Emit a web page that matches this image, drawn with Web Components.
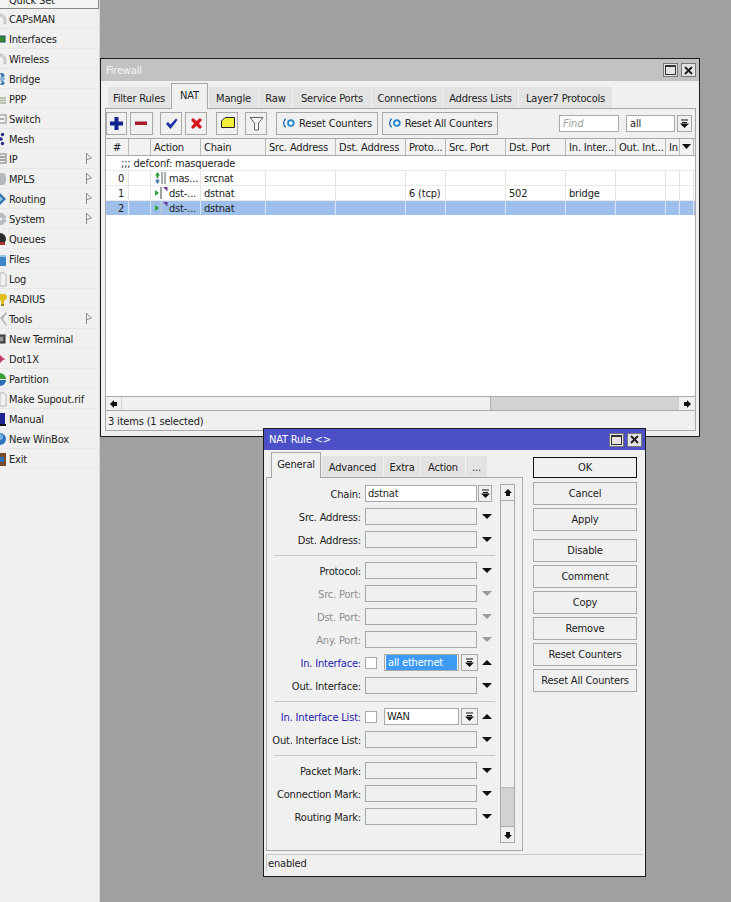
<!DOCTYPE html>
<html><head><meta charset="utf-8"><title>Firewall</title>
<style>
html,body{margin:0;padding:0;background:#a0a0a0}
body{font:11px/13px "DejaVu Sans",sans-serif;font-stretch:condensed;color:#222}
</style></head><body>
<mt-desktop>
  <mt-sidebar>
    <mt-item top>Quick Set</mt-item>
    <mt-item icon="caps">CAPsMAN</mt-item>
    <mt-item icon="iface">Interfaces</mt-item>
    <mt-item icon="caps">Wireless</mt-item>
    <mt-item icon="bridge">Bridge</mt-item>
    <mt-item icon="ppp">PPP</mt-item>
    <mt-item icon="switch">Switch</mt-item>
    <mt-item icon="mesh">Mesh</mt-item>
    <mt-item icon="ip" sub>IP</mt-item>
    <mt-item icon="mpls" sub>MPLS</mt-item>
    <mt-item icon="routing" sub>Routing</mt-item>
    <mt-item icon="system" sub>System</mt-item>
    <mt-item icon="queues">Queues</mt-item>
    <mt-item icon="files">Files</mt-item>
    <mt-item icon="log">Log</mt-item>
    <mt-item icon="radius">RADIUS</mt-item>
    <mt-item icon="tools" sub>Tools</mt-item>
    <mt-item icon="term">New Terminal</mt-item>
    <mt-item icon="dot1x">Dot1X</mt-item>
    <mt-item icon="part">Partition</mt-item>
    <mt-item icon="log">Make Supout.rif</mt-item>
    <mt-item icon="manual">Manual</mt-item>
    <mt-item icon="winbox">New WinBox</mt-item>
    <mt-item icon="exit">Exit</mt-item>
  </mt-sidebar>

  <mt-window heading="Firewall" x="100" y="58" w="600" h="379" bar="22" barcolor="#c2c2c2" titlecolor="#f4f4f4">
    <mt-tabs pad="7" rowh="27">
      <mt-tab w="62">Filter Rules</mt-tab><mt-tab w="37" on>NAT</mt-tab><mt-tab w="49">Mangle</mt-tab><mt-tab w="33">Raw</mt-tab><mt-tab w="78">Service Ports</mt-tab><mt-tab w="70">Connections</mt-tab><mt-tab w="75">Address Lists</mt-tab><mt-tab w="93">Layer7 Protocols</mt-tab>
    </mt-tabs>
    <mt-panel style="margin:0 3px 5px 4px;height:323px">
      <mt-toolbar>
        <mt-tool w="21" icon="plus"></mt-tool>
        <mt-tool w="23" gap="3" icon="minus"></mt-tool>
        <mt-tool w="22" gap="7" icon="check"></mt-tool>
        <mt-tool w="22" gap="3" icon="cross"></mt-tool>
        <mt-tool w="22" gap="9" icon="note"></mt-tool>
        <mt-tool w="22" gap="7" icon="funnel"></mt-tool>
        <mt-tool w="102" gap="9" icon="reset">Reset Counters</mt-tool>
        <mt-tool w="116" gap="4" icon="reset">Reset All Counters</mt-tool>
        <mt-spacer></mt-spacer>
        <mt-input w="60" hint>Find</mt-input>
        <mt-input w="49" style="margin-left:7px">all</mt-input>
        <mt-drop style="margin-left:2px;width:15px" kind="bar"></mt-drop>
      </mt-toolbar>
      <mt-table>
        <mt-row head>
          <mt-cell center>#</mt-cell><mt-cell></mt-cell><mt-cell>Action</mt-cell><mt-cell>Chain</mt-cell><mt-cell>Src. Address</mt-cell><mt-cell>Dst. Address</mt-cell><mt-cell>Proto...</mt-cell><mt-cell>Src. Port</mt-cell><mt-cell>Dst. Port</mt-cell><mt-cell>In. Inter...</mt-cell><mt-cell>Out. Int...</mt-cell><mt-cell>In</mt-cell><mt-cell center><mt-glyph name="down"></mt-glyph></mt-cell>
        </mt-row>
        <mt-row comment>;;; defconf: masquerade</mt-row>
        <mt-row>
          <mt-cell right>0</mt-cell><mt-cell></mt-cell><mt-cell><mt-glyph name="masq"></mt-glyph>mas...</mt-cell><mt-cell>srcnat</mt-cell><mt-cell></mt-cell><mt-cell></mt-cell><mt-cell></mt-cell><mt-cell></mt-cell><mt-cell></mt-cell><mt-cell></mt-cell><mt-cell></mt-cell><mt-cell></mt-cell><mt-cell></mt-cell>
        </mt-row>
        <mt-row>
          <mt-cell right>1</mt-cell><mt-cell></mt-cell><mt-cell><mt-glyph name="dst"></mt-glyph>dst-...</mt-cell><mt-cell>dstnat</mt-cell><mt-cell></mt-cell><mt-cell></mt-cell><mt-cell>6 (tcp)</mt-cell><mt-cell></mt-cell><mt-cell>502</mt-cell><mt-cell>bridge</mt-cell><mt-cell></mt-cell><mt-cell></mt-cell><mt-cell></mt-cell>
        </mt-row>
        <mt-row selected>
          <mt-cell right>2</mt-cell><mt-cell></mt-cell><mt-cell><mt-glyph name="dstsel"></mt-glyph>dst-...</mt-cell><mt-cell>dstnat</mt-cell><mt-cell></mt-cell><mt-cell></mt-cell><mt-cell></mt-cell><mt-cell></mt-cell><mt-cell></mt-cell><mt-cell></mt-cell><mt-cell></mt-cell><mt-cell></mt-cell><mt-cell></mt-cell>
        </mt-row>
      </mt-table>
      <mt-hscroll></mt-hscroll>
      <mt-status plain>3 items (1 selected)</mt-status>
    </mt-panel>
  </mt-window>

  <mt-window heading="NAT Rule &lt;&gt;" x="263" y="428" w="383" h="449" bar="21" barcolor="#4b50c6" titlecolor="#fff">
    <mt-split>
      <div slot="left">
        <mt-tabs pad="7" rowh="27">
          <mt-tab w="50" on>General</mt-tab><mt-tab w="61">Advanced</mt-tab><mt-tab w="36">Extra</mt-tab><mt-tab w="44">Action</mt-tab><mt-tab w="21">...</mt-tab>
        </mt-tabs>
        <mt-panel style="height:374px;width:257px;margin-left:2px">
          <mt-form>
            <mt-field label="Chain:" value="dstnat" arrow="bar"></mt-field>
            <mt-field label="Src. Address:" arrow="down"></mt-field>
            <mt-field label="Dst. Address:" arrow="down"></mt-field>
            <mt-sep></mt-sep>
            <mt-field label="Protocol:" arrow="down"></mt-field>
            <mt-field label="Src. Port:" arrow="down" disabled></mt-field>
            <mt-field label="Dst. Port:" arrow="down" disabled></mt-field>
            <mt-field label="Any. Port:" arrow="down" disabled></mt-field>
            <mt-field label="In. Interface:" value="all ethernet" blue check selected></mt-field>
            <mt-field label="Out. Interface:" arrow="down"></mt-field>
            <mt-sep></mt-sep>
            <mt-field label="In. Interface List:" value="WAN" blue check></mt-field>
            <mt-field label="Out. Interface List:" arrow="down"></mt-field>
            <mt-sep></mt-sep>
            <mt-field label="Packet Mark:" arrow="down"></mt-field>
            <mt-field label="Connection Mark:" arrow="down"></mt-field>
            <mt-field label="Routing Mark:" arrow="down"></mt-field>
          </mt-form>
          <mt-vscroll></mt-vscroll>
        </mt-panel>
      </div>
      <mt-actions slot="right">
        <mt-btn default style="height:21px">OK</mt-btn>
        <mt-btn style="margin-top:1px">Cancel</mt-btn>
        <mt-btn>Apply</mt-btn>
        <mt-btn style="margin-top:5px">Disable</mt-btn>
        <mt-btn>Comment</mt-btn>
        <mt-btn>Copy</mt-btn>
        <mt-btn>Remove</mt-btn>
        <mt-btn>Reset Counters</mt-btn>
        <mt-btn>Reset All Counters</mt-btn>
      </mt-actions>
    </mt-split>
    <mt-status>enabled</mt-status>
  </mt-window>
</mt-desktop>

<script>
const FONT='font:11px/13px "DejaVu Sans",sans-serif;font-stretch:condensed;letter-spacing:-.18px;';
const ICONS={
 caps:'<path d="M0 3c4 0 6 3 6 7v3H4v-3C4 7 2 5 0 5z" fill="#d4d4d4" stroke="#b4b4b4" stroke-width=".6"/>',
 iface:'<rect x="-1" y="5" width="6" height="6" fill="#2f8f2f" stroke="#2b4a5a"/>',
 bridge:'<path d="M0 2h3l2 3-2 1 2 2-2 2 2 2-2 2H0l2-3-2-2 2-2z" fill="#3f78b5"/><path d="M0 6h4v4H0z" fill="#8fb4da"/>',
 ppp:'<path d="M0 7h6M0 9.5h6M0 12h6" stroke="#a6b59a" stroke-width="1.3"/>',
 switch:'<rect x="-2" y="4" width="8" height="8" fill="#f2f2f2" stroke="#8a8a8a"/><path d="M0 8h4" stroke="#666"/>',
 mesh:'<circle cx="2.5" cy="3.5" r="1.7" fill="#23307f"/><circle cx="1" cy="8" r="1.7" fill="#23307f"/><circle cx="2.5" cy="12.5" r="1.7" fill="#23307f"/>',
 ip:'<rect x="-2" y="3" width="8" height="9" fill="#efefef" stroke="#777"/><path d="M-1 6h6M-1 9h6" stroke="#555"/>',
 mpls:'<path d="M0 2h3c2 0 3 2 3 6s-1 6-3 6H0z" fill="#b5b8bd"/>',
 routing:'<path d="M0 2l6 6-6 6z" fill="#2f72ad"/><path d="M0 5l3 3-3 3z" fill="#8cc0e4"/>',
 system:'<path d="M0 2h3l1 2 2 1v2l-2 1 2 1v2l-2 1-1 2H0z" fill="#b8bcc0"/><circle cx="1" cy="8" r="1.5" fill="#eee"/>',
 queues:'<circle cx="0" cy="8" r="6" fill="#2c2a2a"/><path d="M0 11h5v3H0z" fill="#a33"/>',
 files:'<path d="M0 4h6v11H0z" fill="#3d88c8"/><path d="M0 4h6v2H0z" fill="#9cc8e8"/>',
 log:'<path d="M0 2h4l2 2v11H0z" fill="#f4f4f4" stroke="#b5b5b5"/>',
 radius:'<path d="M0 3h4c2 0 3 1 3 3s-2 3-3 4v3H1v-3L0 9z" fill="#e0c020"/><rect x="1" y="13" width="3" height="2" fill="#98881c"/>',
 tools:'<path d="M0 7l6-6 1 1-4 6 4 6-1 1z" fill="#b4b6b8"/>',
 term:'<rect x="-2" y="4" width="7" height="8" fill="#55565a" stroke="#333"/><rect x="-1" y="6" width="4" height="4" fill="#9a9a9a"/>',
 dot1x:'<path d="M0 4l4 4-4 4z" fill="#c03a5a"/><path d="M5 8H2" stroke="#d27"/>',
 part:'<path d="M0 2c3 0 6 3 6 6H0z" fill="#3aa03a"/><path d="M0 9h6c0 3-3 6-6 6z" fill="#2f6fb5"/>',
 manual:'<rect x="-1" y="2" width="6" height="11" fill="#1e2590"/><rect x="-1" y="13" width="7" height="2" fill="#111"/>',
 winbox:'<circle cx="0" cy="8" r="6" fill="#2f74c0"/><circle cx="0" cy="6" r="3" fill="#7bb2e2"/>',
 exit:'<rect x="-1" y="2" width="7" height="13" fill="#7a4a2a"/><rect x="0" y="6" width="4" height="5" fill="#2a70c0"/>'
};
const TOOLS={
 plus:'<path d="M5.5 1h4v4.5H14v4H9.5V14h-4V9.500H1v-4h4.500z" fill="#10238f"/>',
 minus:'<rect x="1" y="5.500" width="12" height="3.500" fill="#a91e24"/>',
 check:'<path d="M2 8l2-2 2.500 2.500L12 2.500l1.500 1.500L6.500 13z" fill="#1a2fa8"/>',
 cross:'<path d="M2 4l2-2 3.500 3L11 2l2 2-3 3.500 3 3.500-2 2-3.500-3L4 13l-2-2 3-3.500z" fill="#d5171c"/>',
 note:'<path d="M1.500 5L5 1.500h9.500v10h-13z" fill="#f1ee3c" stroke="#222"/>',
 funnel:'<path d="M1 1.500h13L9.500 7v7h-4V7z" fill="#f5f5f5" stroke="#666"/>',
 reset:'<path d="M4 2.500C1 5 1 9 4 11.500" fill="none" stroke="#2a70b8" stroke-width="1.500"/><circle cx="9.500" cy="7" r="3" fill="#fff" stroke="#2a86c8" stroke-width="2"/>'
};
const tpl=(css,html)=>{const t=document.createElement('template');t.innerHTML='<style>'+css+'</style>'+html;return t};
function def(name,css,html,extra){
  const t=tpl(css,html);
  customElements.define(name,class extends HTMLElement{
    constructor(){super();this.attachShadow({mode:'open'}).appendChild(t.content.cloneNode(true));}
    connectedCallback(){if(extra)extra(this,this.shadowRoot);}
  });
}
def('mt-desktop',':host{display:block;position:relative;width:731px;height:902px;background:#a0a0a0;overflow:hidden;'+FONT+'color:#222}','<slot></slot>');
def('mt-sidebar',':host{display:flex;flex-direction:column;width:99px;height:902px;background:#f0f0f0;border-right:1px solid #d8d8d8;overflow:hidden}','<slot></slot>');
def('mt-item',`:host{display:flex;height:19px;flex:none;align-items:center;border-bottom:1px solid #e6e6e6;position:relative;overflow:hidden;color:#222;padding-left:0}
:host([top]){height:8px;align-items:flex-end;border-bottom:1px solid #888;border-right:1px solid #888;background:#f4f4f4}
.i{width:9px;height:16px;flex:none;display:block}.l{line-height:15px;white-space:nowrap;padding-top:2px}
.s{position:absolute;left:86px;top:4px;width:7px;height:11px}`,
`<svg class="i" viewBox="0 0 9 16"></svg><span class="l"><slot></slot></span>`,(h,s)=>{
  const n=h.getAttribute('icon');if(n)s.querySelector('.i').innerHTML='<svg x="0" y="0" width="7" height="16" viewBox="0 0 7 16">'+ICONS[n]+'</svg>';
  if(h.hasAttribute('sub')){s.querySelector('.l').insertAdjacentHTML('afterend','<svg class="s" viewBox="0 0 7 11"><path d="M.5 0v11M.5.500L5.500 5 1 6.500" fill="#f6f6f6" stroke="#8a8a8a"/></svg>')}
});
def('mt-window',`:host{display:flex;flex-direction:column;position:absolute;box-sizing:border-box;background:#f0f0f0;border:1px solid #1c1c1c}
.bar{display:flex;align-items:center;flex:none;padding-left:5px;font-size:11px}
.t{flex:1}.c{width:15px;height:14px;box-sizing:border-box;background:#e4e4e4;border:1px solid #777;display:flex;align-items:center;justify-content:center;margin-left:3px}
.cs{display:flex;margin-right:3px}.body{flex:1;display:flex;flex-direction:column;min-height:0}`,
`<div class="bar"><span class="t"></span><span class="cs"><span class="c"><svg width="11" height="10"><rect x=".5" y=".5" width="10" height="9" fill="none" stroke="#333"/><path d="M0 1.500h11" stroke="#333"/></svg></span><span class="c"><svg width="9" height="9"><path d="M1 1l7 7M8 1L1 8" stroke="#222" stroke-width="2"/></svg></span></span></div><div class="body"><slot></slot></div>`,(h,s)=>{
  const g=a=>h.getAttribute(a);
  h.style.left=g('x')+'px';h.style.top=g('y')+'px';h.style.width=g('w')+'px';h.style.height=g('h')+'px';
  const b=s.querySelector('.bar');b.style.height=g('bar')+'px';b.style.background=g('barcolor');b.style.color=g('titlecolor');
  s.querySelector('.t').textContent=g('heading');
});
def('mt-tabs',`:host{display:flex;align-items:flex-end;flex:none;position:relative;z-index:1}`,'<slot></slot>',(h)=>{
  h.style.paddingLeft=h.getAttribute('pad')+'px';h.style.height=h.getAttribute('rowh')+'px';
});
def('mt-tab',`:host{display:flex;box-sizing:border-box;height:21px;align-items:center;justify-content:center;background:#e3e3e3;margin-right:1px;flex:none;white-space:nowrap;color:#222;padding-top:1px}
:host([on]){height:26px;background:#f0f0f0;border:1px solid #a8a8a8;border-bottom:0;margin-bottom:-1px;padding-top:0;padding-bottom:3px}`,'<slot></slot>',(h)=>{h.style.width=h.getAttribute('w')+'px'});
def('mt-panel',`:host{display:flex;box-sizing:border-box;border:1px solid #a8a8a8;flex-direction:column;background:#f0f0f0}`,'<slot></slot>',(h)=>{
  if(h.querySelector('mt-form'))h.style.flexDirection='row';
});
def('mt-toolbar',`:host{display:flex;flex:none;height:26px;padding:3px 3px 0 0;align-items:flex-start}`,'<slot></slot>');
def('mt-spacer',':host{display:block;flex:1}','');
def('mt-tool',`:host{display:flex;box-sizing:border-box;height:23px;flex:none;align-items:center;justify-content:center;border:1px solid #a8a8a8;background:#f0f0f0;white-space:nowrap;gap:3px}
svg{width:15px;height:15px;flex:none}`,'<svg viewBox="0 0 15 15"></svg><span><slot></slot></span>',(h,s)=>{
  h.style.width=h.getAttribute('w')+'px';if(h.getAttribute('gap'))h.style.marginLeft=h.getAttribute('gap')+'px';
  s.querySelector('svg').innerHTML=TOOLS[h.getAttribute('icon')];
  if(h.getAttribute('icon')==='reset')s.querySelector('svg').style.width='14px';
  else s.querySelector('span').remove();
});
def('mt-input',`:host{display:block;box-sizing:border-box;height:17px;margin-top:3px;background:#fff;border:1px solid #a8a8a8;padding:0 3px;line-height:15px;flex:none;color:#222}
:host([hint]){color:#a0a0a0;font-style:italic}`,'<slot></slot>',(h)=>{h.style.width=h.getAttribute('w')+'px'});
def('mt-drop',`:host{display:flex;box-sizing:border-box;height:17px;margin-top:3px;align-items:center;justify-content:center;border:1px solid #a8a8a8;background:#f0f0f0;flex:none}`,
 '<svg width="9" height="9" viewBox="0 0 9 9"><path d="M1 1h7M2 3.500h5" stroke="#111"/><path d="M0 4.500h9L4.500 9z" fill="#111"/></svg>');
def('mt-table',`:host{display:flex;flex-direction:column;flex:1;min-height:0;background:#fff;--cols:23px 22px 50px 65px 70px 70px 40px 60px 60px 50px 50px 14px 14px}`,'<slot></slot>');
def('mt-row',`:host{display:grid;grid-template-columns:var(--cols);height:15px;box-sizing:border-box;border-bottom:1px solid #e9e9e9;flex:none;color:#222;--line:#e4e4e4;background:#fff}
:host([head]){height:18px;background:#f2f2f2;border-top:1px solid #a8a8a8;border-bottom:1px solid #a8a8a8;--line:#b8b8b8}
:host([selected]){background:#9dbfe9;border-bottom-color:#fff;--line:#dbe6f6}
:host([comment]){display:block;padding:1px 0 0 15px;line-height:14px}`,'<slot></slot>');
def('mt-cell',`:host{display:flex;align-items:center;box-sizing:border-box;border-right:1px solid var(--line);padding:2px 0 0 3px;white-space:nowrap;overflow:hidden;line-height:12px;min-width:0}
:host([center]){justify-content:center;padding:2px 0 0}:host([right]){justify-content:flex-end;padding:2px 4px 0 0}`,'<slot></slot>');
def('mt-glyph',`:host{display:inline-block;flex:none;margin-top:-2px}svg{display:block}`,'<svg></svg>',(h,s)=>{
  const n=h.getAttribute('name'),v=s.querySelector('svg');
  if(n==='down'){v.setAttribute('width',9);v.setAttribute('height',6);v.innerHTML='<path d="M0 0h9L4.500 5z" fill="#111"/>';return}
  h.style.width='15px';v.setAttribute('width',15);v.setAttribute('height',14);
  if(n==='masq')v.innerHTML='<path d="M3.500 1L6 4.500H4.500V7h-2V4.500H1z" fill="#2b9a3a"/><path d="M3.500 13L1 9.500h1.500V8h2v1.500H6z" fill="#4a7ab0"/><rect x="7" y="1" width="2" height="12" fill="#a9b0b0"/><rect x="10" y="1" width="2" height="12" fill="#a9b0b0"/>';
  else{const bar=n==='dstsel'?'#b4c6dc':'#9aa2a2';v.innerHTML='<path d="M1 4l4 3-4 3z" fill="#2ea13c"/><rect x="6" y="1" width="2" height="12" fill="'+bar+'"/><path d="M9 1h4.500v4.500z" fill="#6a3a8e"/>';}
});
def('mt-hscroll',`:host{display:flex;flex:none;height:15px;box-sizing:border-box;border-top:1px solid #a8a8a8;border-bottom:1px solid #a8a8a8;background:#f0f0f0}
.b{width:15px;display:flex;align-items:center;justify-content:center;flex:none}.th{width:368px;background:#f0f0f0;border-left:1px solid #d0d0d0;border-right:1px solid #b0b0b0;flex:none}.tr{flex:1;background:#d2d2d2}`,
 '<span class="b"><svg width="8" height="8"><path d="M0 4l4-4v2h3v4H4v2z" fill="#111"/></svg></span><span class="th"></span><span class="tr"></span><span class="b" style="margin-right:1px"><svg width="8" height="8"><path d="M8 4L4 0v2H1v4h3v2z" fill="#111"/></svg></span>');
def('mt-status',`:host{display:block;flex:none;box-sizing:border-box;height:17px;margin:3px 2px 5px 2px;border:1px solid #c8c8c8;border-right-color:#f0f0f0;border-bottom:0;padding:1px 0 0 1px;line-height:16px;color:#222}
:host([plain]){margin:0;border:0;height:19px;padding:1px 0 0 2px;line-height:19px}`,'<slot></slot>');
def('mt-split',`:host{display:flex;flex:none;height:401px}.l{width:259px;flex:none}.r{margin:7px 0 0 10px}`,'<div class="l"><slot name="left"></slot></div><div class="r"><slot name="right"></slot></div>');
def('mt-actions',`:host{display:flex;flex-direction:column;gap:3px;width:104px}`,'<slot></slot>');
def('mt-btn',`:host{display:flex;box-sizing:border-box;height:23px;align-items:center;justify-content:center;border:1px solid #a8a8a8;background:#f0f0f0;white-space:nowrap;flex:none;color:#222}
:host([default]){border-color:#111}`,'<slot></slot>');
def('mt-form',`:host{display:flex;flex-direction:column;gap:6px;width:233px;flex:none;padding-top:7px;box-sizing:border-box}`,'<slot></slot>');
def('mt-sep',`:host{display:block;height:1px;margin:1px 5px 0 7px;background:#c8c8c8;margin-bottom:0;position:relative}`,'');
def('mt-vscroll',`:host{display:flex;flex-direction:column;width:15px;height:359px;margin-top:6px;box-sizing:border-box;border:1px solid #a8a8a8;background:#f0f0f0;flex:none}
.b{height:15px;flex:none;display:flex;align-items:center;justify-content:center}.t{flex:1;border-top:1px solid #a8a8a8}.th{height:40px;background:#d2d2d2;border-top:1px solid #b8b8b8;border-bottom:1px solid #a8a8a8;flex:none;box-sizing:border-box}`,
 '<span class="b"><svg width="8" height="8"><path d="M4 0l4 4H6v3H2V4H0z" fill="#111"/></svg></span><span class="t"></span><span class="th"></span><span class="b"><svg width="8" height="8"><path d="M4 8L0 4h2V1h4v3h2z" fill="#111"/></svg></span>');
def('mt-field',`:host{display:flex;height:17px;flex:none;align-items:center;white-space:nowrap;color:#222}
.lb{width:94px;margin-right:4px;text-align:right;flex:none;padding-top:2px;box-sizing:border-box}
:host([blue]) .lb{color:#2323ad}:host([disabled]) .lb{color:#8e8e8e}
.in{box-sizing:border-box;height:17px;width:112px;border:1px solid #a8a8a8;background:#f0f0f0;flex:none;padding:0 2px;line-height:15px}
.in.v{background:#fff}.in.n{width:75px;margin-left:7px}
.sel{background:#3d9bf5;color:#fff;display:block;padding:0 2px;margin:0 -1px}
.ck{box-sizing:border-box;width:12px;height:12px;border:1px solid #a8a8a8;background:#fff;flex:none}
.dr{box-sizing:border-box;width:14px;height:17px;margin-left:1px;border:1px solid #a8a8a8;flex:none;display:flex;align-items:center;justify-content:center}
.dr.w{width:17px;margin-left:2px}
.ar{width:15px;flex:none;display:flex;justify-content:flex-end;margin-left:0}`,
 '<span class="lb"></span><span class="host"></span>',(h,s)=>{
  const g=a=>h.getAttribute(a),has=a=>h.hasAttribute(a),v=g('value')||'';
  s.querySelector('.lb').textContent=g('label');
  const bar='<svg width="9" height="9"><path d="M1 1h7M2 3.500h5" stroke="#111"/><path d="M0 4.500h9L4.500 9z" fill="#111"/></svg>';
  const c=has('disabled')?'#9a9a9a':'#111';
  const tri=d=>'<svg width="10" height="5">'+(d?'<path d="M0 0h10L5 5z" fill="'+c+'"/>':'<path d="M0 5h10L5 0z" fill="'+c+'"/>')+'</svg>';
  const box=s.querySelector('.host');box.style.display='contents';
  if(has('check')){
    const val=has('selected')?'<span class="sel">'+v+'</span>':v;
    box.innerHTML='<span class="ck"></span><span class="in v n">'+val+'</span><span class="dr w">'+bar+'</span><span class="ar" style="width:14px">'+tri(false)+'</span>';
  }else if(g('arrow')==='bar'){
    box.innerHTML='<span class="in v">'+v+'</span><span class="dr">'+bar+'</span>';
  }else{
    box.innerHTML='<span class="in"></span><span class="ar">'+tri(true)+'</span>';
  }
});
</script>
</body></html>
